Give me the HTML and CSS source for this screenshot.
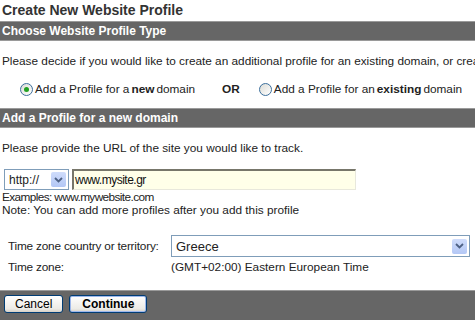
FILE: index.html
```html
<!DOCTYPE html>
<html lang="en">
<head>
    <meta charset="UTF-8">
    <title>Create New Website Profile</title>
    <link rel="stylesheet" href="styles.css">
</head>
<body>

    <!-- Title -->
    <h1 class="page-title">Create New Website Profile</h1>

    <!-- Profile type -->
    <div class="bar">Choose Website Profile Type</div>
    <p class="intro">Please decide if you would like to create an additional profile for an existing domain, or create a new profile for a new domain.</p>

    <div class="choice-row">
        <label class="choice">
            <span class="radio checked"></span>
            Add a Profile for a <b>new</b> domain
        </label>
        <span class="or">OR</span>
        <label class="choice">
            <span class="radio"></span>
            Add a Profile for an <b>existing</b> domain
        </label>
    </div>

    <!-- New domain -->
    <div class="bar">Add a Profile for a new domain</div>
    <p class="intro">Please provide the URL of the site you would like to track.</p>

    <div class="url-row">
        <div class="select protocol">
            <span class="select-value">http://</span>
            <span class="select-arrow">
                <svg width="9" height="6" viewBox="0 0 9 6"><path d="M1 1 L4.5 4.5 L8 1" fill="none" stroke="#4d6185" stroke-width="1.8"/></svg>
            </span>
        </div>
        <div class="url-input">www.mysite.gr</div>
    </div>
    <div class="hint">
        <div class="example">Examples: www.mywebsite.com</div>
        <div>Note: You can add more profiles after you add this profile</div>
    </div>

    <div class="tz">
        <div class="tz-row">
            <span class="tz-label">Time zone country or territory:</span>
            <div class="select country">
                <span class="select-value">Greece</span>
                <span class="select-arrow">
                    <svg width="9" height="6" viewBox="0 0 9 6"><path d="M1 1 L4.5 4.5 L8 1" fill="none" stroke="#4d6185" stroke-width="1.8"/></svg>
                </span>
            </div>
        </div>
        <div class="tz-row">
            <span class="tz-label">Time zone:</span>
            <span>(GMT+02:00) Eastern European Time</span>
        </div>
    </div>

    <!-- Actions -->
    <div class="footer-bar">
        <button class="btn">Cancel</button>
        <button class="btn primary">Continue</button>
    </div>

</body>
</html>
```

FILE: styles.css
```css
body {
    font-family: "Liberation Sans", Arial, sans-serif;
    font-size: 11.8px;
    color: #222;
    margin: 0;
    padding: 0 0 0 2px;
    width: 473px;
    overflow: hidden;
}
.page-title {
    font-size: 14px;
    font-weight: bold;
    color: #333;
    margin: 0;
    padding-top: 3px;
    height: 18px;
    line-height: 14px;
}
.bar {
    background-color: #666666;
    border-top: 1px solid #9a9a9a;
    border-bottom: 1px solid #9a9a9a;
    color: #fff;
    font-size: 12px;
    font-weight: bold;
    height: 18px;
    line-height: 18px;
    padding-left: 2px;
    margin-left: -2px;
    width: 477px;
    white-space: nowrap;
}
.intro {
    margin: 13px 0 0;
    white-space: nowrap;
    overflow: hidden;
    line-height: 14px;
}
.choice-row {
    display: flex;
    align-items: center;
    margin: 13px 0 11px 18px;
    height: 16px;
}
.choice {
    display: flex;
    align-items: center;
    gap: 2px;
}
.or {
    font-weight: bold;
    margin: 0 19px 0 27px;
}
.radio {
    width: 11px;
    height: 11px;
    border: 1px solid #3c6f9c;
    border-radius: 50%;
    background: linear-gradient(135deg, #dcdcd6, #fff);
    display: flex;
    align-items: center;
    justify-content: center;
}
.radio.checked::after {
    content: "";
    width: 5px;
    height: 5px;
    border-radius: 50%;
    background: #21a121;
}
.url-row {
    display: flex;
    gap: 3px;
    margin: 14px 0 0 2px;
}
.select {
    display: flex;
    align-items: center;
    border: 1px solid #7f9db9;
    background: #fff;
    height: 19px;
    font-size: 12px;
}
.select-value {
    flex: 1;
    padding-left: 4px;
}
.select-arrow {
    width: 15px;
    height: 15px;
    margin-right: 2px;
    background: linear-gradient(#cfdcfb, #b3c7f5);
    border-radius: 2px;
    display: flex;
    align-items: center;
    justify-content: center;
}
.protocol {
    width: 63px;
}
.url-input {
    width: 280px;
    height: 18px;
    line-height: 18px;
    border-top: 2px solid #77766a;
    border-left: 2px solid #77766a;
    border-right: 1px solid #e8e8dc;
    border-bottom: 1px solid #e8e8dc;
    background: #ffffe9;
    font-size: 12px;
    letter-spacing: -0.5px;
    padding-left: 1px;
    color: #111;
}
.hint {
    margin-top: 1px;
    line-height: 13px;
}
.example {
    letter-spacing: -0.6px;
}
.tz {
    margin: 18px 0 0 6px;
}
.tz-row {
    display: flex;
    align-items: center;
    min-height: 15px;
}
.tz-row + .tz-row {
    margin-top: 2px;
}
.tz-label {
    width: 163px;
    letter-spacing: -0.2px;
}
.country {
    width: 297px;
    height: 20px;
}
.country .select-value {
    font-size: 13px;
}
.footer-bar {
    background-color: #666666;
    border-top: 1px solid #9a9a9a;
    margin: 16px 0 0 -2px;
    padding: 4px 4px 8px;
    display: flex;
    gap: 6px;
}
.btn {
    font-family: "Liberation Sans", Arial, sans-serif;
    font-size: 12px;
    color: #000;
    background: linear-gradient(#ffffff, #ecebe6 80%, #d6d0c5);
    border: 1px solid #003c74;
    border-radius: 3px;
    height: 18px;
    padding: 0 10px;
}
.btn.primary {
    font-weight: bold;
    padding: 0 12px;
    box-shadow: inset 0 0 0 1px #9eb8ec;
}
```
